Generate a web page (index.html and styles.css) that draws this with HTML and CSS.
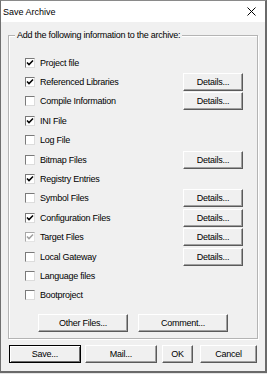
FILE: index.html
```html
<!DOCTYPE html>
<html lang="en">
<head>
    <meta charset="UTF-8">
    <title>Save Archive</title>
    <link rel="stylesheet" href="styles.css">
</head>
<body>

    <div class="window">
        <div class="titlebar">
            <span class="title">Save Archive</span>
            <svg class="close" width="9" height="9" viewBox="0 0 9 9">
                <path d="M0.5 0.5 L8.5 8.5 M8.5 0.5 L0.5 8.5" stroke="#000" stroke-width="1" fill="none"/>
            </svg>
        </div>

        <div class="content">
            <div class="group">
                <span class="group-label">Add the following information to the archive:</span>

                <div class="rows">
                    <div class="row"><span class="box checked"></span><span>Project file</span></div>
                    <div class="row"><span class="box checked"></span><span>Referenced Libraries</span><button class="btn">Details...</button></div>
                    <div class="row"><span class="box"></span><span>Compile Information</span><button class="btn">Details...</button></div>
                    <div class="row"><span class="box checked"></span><span>INI File</span></div>
                    <div class="row"><span class="box"></span><span>Log File</span></div>
                    <div class="row"><span class="box"></span><span>Bitmap Files</span><button class="btn">Details...</button></div>
                    <div class="row"><span class="box checked"></span><span>Registry Entries</span></div>
                    <div class="row"><span class="box"></span><span>Symbol Files</span><button class="btn">Details...</button></div>
                    <div class="row"><span class="box checked"></span><span>Configuration Files</span><button class="btn">Details...</button></div>
                    <div class="row"><span class="box checked disabled"></span><span>Target Files</span><button class="btn">Details...</button></div>
                    <div class="row"><span class="box"></span><span>Local Gateway</span><button class="btn">Details...</button></div>
                    <div class="row"><span class="box"></span><span>Language files</span></div>
                    <div class="row"><span class="box"></span><span>Bootproject</span></div>
                </div>

                <div class="extra">
                    <button class="btn wide">Other Files...</button>
                    <button class="btn wide">Comment...</button>
                </div>
            </div>

            <div class="actions">
                <button class="btn default save">Save...</button>
                <button class="btn mail">Mail...</button>
                <button class="btn ok">OK</button>
                <button class="btn cancel">Cancel</button>
            </div>
        </div>
    </div>

</body>
</html>
```

FILE: styles.css
```css
body {
    margin: 0;
    background-color: #e6e6e6;
    font-family: 'Liberation Sans', Arial, sans-serif;
    font-size: 9px;
    color: #000;
}

.window {
    width: 267px;
    height: 373px;
    box-sizing: border-box;
    background-color: #f0f0f0;
    border-top: 1px solid #8a8a8a;
    border-left: 1px solid #707070;
    border-right: 2px solid #6a6a6a;
    border-bottom: 2px solid #6a6a6a;
    display: flex;
    flex-direction: column;
}

.titlebar {
    height: 21px;
    background-color: #fff;
    display: flex;
    align-items: center;
    justify-content: space-between;
    padding: 0 9px 0 2px;
}

.title {
    font-size: 9px;
    padding-top: 1px;
}

.close {
    display: block;
}

.content {
    padding: 13px 7px 0 7px;
}

/* etched group box */
.group {
    position: relative;
    height: 304px;
    box-sizing: border-box;
    border: 1px solid #b4b4b4;
    box-shadow: inset 1px 1px 0 #fff, 1px 1px 0 #fff;
    padding: 17px 14px 0 16px;
    letter-spacing: -0.25px;
}

.group-label {
    position: absolute;
    top: -6px;
    left: 6px;
    padding: 0 2px;
    background-color: #f0f0f0;
    line-height: 11px;
}

.rows {
    display: flex;
    flex-direction: column;
}

.row {
    height: 19.4px;
    display: grid;
    grid-template-columns: 10px 1fr 60px;
    column-gap: 5px;
    align-items: center;
}

.box {
    width: 10px;
    height: 10px;
    box-sizing: border-box;
    background-color: #fff;
    border-top: 1px solid #7a7a7a;
    border-left: 1px solid #7a7a7a;
    border-right: 1px solid #dcdcdc;
    border-bottom: 1px solid #dcdcdc;
}

.box.checked {
    background: #fff url("data:image/svg+xml,%3Csvg xmlns='http://www.w3.org/2000/svg' width='8' height='8' viewBox='0 0 8 8'%3E%3Cpath d='M1 3.5 L3 5.6 L7 1.4' stroke='%23000' stroke-width='1.5' fill='none'/%3E%3C/svg%3E") center no-repeat;
}

.box.checked.disabled {
    border-color: #a8a8a8 #e4e4e4 #e4e4e4 #a8a8a8;
    background: #fff url("data:image/svg+xml,%3Csvg xmlns='http://www.w3.org/2000/svg' width='8' height='8' viewBox='0 0 8 8'%3E%3Cpath d='M1 3.5 L3 5.6 L7 1.4' stroke='%23a0a0a0' stroke-width='1.5' fill='none'/%3E%3C/svg%3E") center no-repeat;
}

.btn {
    height: 18px;
    box-sizing: border-box;
    padding: 0;
    margin: 0;
    font-family: inherit;
    font-size: 9px;
    letter-spacing: -0.25px;
    color: #000;
    background-color: #f0f0f0;
    border-top: 1px solid #fff;
    border-left: 1px solid #fff;
    border-right: 1px solid #5a5a5a;
    border-bottom: 1px solid #5a5a5a;
    box-shadow: inset -1px -1px 0 #a0a0a0;
}

.extra {
    display: flex;
    justify-content: center;
    gap: 10px;
    margin-top: 8.5px;
    margin-left: -16px;
    margin-right: -14px;
}

.btn.wide {
    width: 90px;
}

.actions {
    display: flex;
    margin-top: 6px;
    padding-left: 1px;
}

.btn.default {
    border: 1px solid #000;
    box-shadow: inset 1px 1px 0 #fff, inset -1px -1px 0 #6a6a6a;
}

.save {
    width: 72px;
}

.mail {
    width: 72px;
    margin-left: 4px;
}

.ok {
    width: 31px;
    margin-left: 5px;
}

.cancel {
    width: 57px;
    margin-left: 7px;
}
```
